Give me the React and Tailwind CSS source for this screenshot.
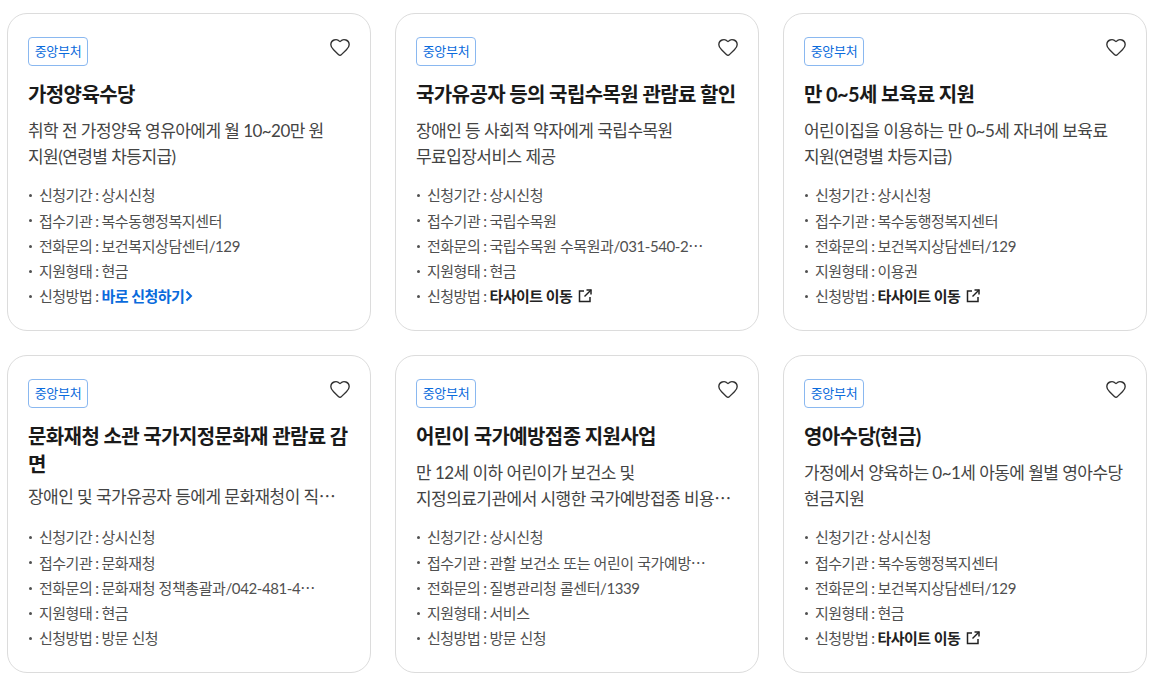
import React from 'react';
import { Heart } from 'lucide-react';

const cards = [
  {
    title: '가정양육수당',
    desc: '취학 전 가정양육 영유아에게 월 10~20만 원 지원(연령별 차등지급)',
    org: '복수동행정복지센터',
    tel: '보건복지상담센터/129',
    kind: '현금',
    apply: 'direct',
  },
  {
    title: '국가유공자 등의 국립수목원 관람료 할인',
    desc: '장애인 등 사회적 약자에게 국립수목원 무료입장서비스 제공',
    org: '국립수목원',
    tel: '국립수목원 수목원과/031-540-2000',
    kind: '현금',
    apply: 'external',
  },
  {
    title: '만 0~5세 보육료 지원',
    desc: '어린이집을 이용하는 만 0~5세 자녀에 보육료 지원(연령별 차등지급)',
    org: '복수동행정복지센터',
    tel: '보건복지상담센터/129',
    kind: '이용권',
    apply: 'external',
  },
  {
    title: '문화재청 소관 국가지정문화재 관람료 감면',
    desc: '장애인 및 국가유공자 등에게 문화재청이 직접 관리하는 문화재 관람료 감면',
    org: '문화재청',
    tel: '문화재청 정책총괄과/042-481-4600',
    kind: '현금',
    apply: 'visit',
    oneLine: true,
  },
  {
    title: '어린이 국가예방접종 지원사업',
    desc: '만 12세 이하 어린이가 보건소 및 지정의료기관에서 시행한 국가예방접종 비용 지원합니다',
    org: '관할 보건소 또는 어린이 국가예방접종 지정의료기관',
    tel: '질병관리청 콜센터/1339',
    kind: '서비스',
    apply: 'visit',
  },
  {
    title: '영아수당(현금)',
    desc: '가정에서 양육하는 0~1세 아동에 월별 영아수당 현금지원',
    org: '복수동행정복지센터',
    tel: '보건복지상담센터/129',
    kind: '현금',
    apply: 'external',
  },
];

function ExternalIcon() {
  return (
    <svg width="14" height="14" viewBox="0 0 14 14" fill="none" stroke="#222" strokeWidth="1.5" className="ml-[6px] shrink-0">
      <path d="M6 2H1.5v10.5H12V8" />
      <path d="M8.5 1H13v4.5" />
      <path d="M13 1L6.5 7.5" />
    </svg>
  );
}

function ChevronIcon() {
  return (
    <svg width="8" height="12" viewBox="0 0 8 12" fill="none" stroke="#0a6bdc" strokeWidth="2" className="ml-[1px] shrink-0">
      <path d="M1.5 1.5L6 6l-4.5 4.5" />
    </svg>
  );
}

function InfoRow({ label, children }) {
  return (
    <li className="flex items-center h-[25.2px] text-[15px] tracking-[-0.5px] text-[#505050]">
      <span className="w-[3px] h-[3px] rounded-full bg-[#505050] ml-[1px] mr-[7px] shrink-0"></span>
      <span className="shrink-0">{label}</span>
      <span className="shrink-0 mx-[3px]">:</span>
      {children}
    </li>
  );
}

// the ellipsis takes the block's font, so the block stays on the CJK font and the text goes in a span
function Clipped({ text }) {
  return (
    <span className="truncate max-w-[218px] tracking-[-0.4px] font-['Noto_Sans_CJK_KR',sans-serif]">
      <span className="font-['Lato','Noto_Sans_CJK_KR',sans-serif]">{text}</span>
    </span>
  );
}

function ApplyValue({ type }) {
  if (type === 'direct') {
    return <span className="flex items-center font-bold text-[#0a6bdc]">바로 신청하기<ChevronIcon /></span>;
  }
  if (type === 'external') {
    return <span className="flex items-center font-bold text-[#222]">타사이트 이동<ExternalIcon /></span>;
  }
  return <span>방문 신청</span>;
}

function Card({ card }) {
  return (
    <div className="h-[318px] bg-white border border-[#dcdcdc] rounded-[20px] pt-[23px] pb-[21px] px-[20px] flex flex-col">
      <div className="flex items-start justify-between">
        <span className="w-[60px] h-[29px] flex items-center justify-center border border-[#8ab8f0] rounded-[4px] text-[13px] tracking-[-0.3px] text-[#0a6bdc]">
          중앙부처
        </span>
        <Heart size={22} strokeWidth={1.5} className="text-[#333] -mr-[1px] -mt-[1px]" />
      </div>
      <h3 className="mt-[14px] text-[20px] leading-[28px] font-bold text-[#1a1a1a] tracking-[-0.6px] break-all">{card.title}</h3>
      <p className={`text-[17px] leading-[24.5px] text-[#444] tracking-[-0.55px] break-keep font-['Noto_Sans_CJK_KR',sans-serif] ${card.oneLine ? 'mt-[6px] truncate' : 'mt-[10px] line-clamp-2'}`}>
        <span className="font-['Lato','Noto_Sans_CJK_KR',sans-serif]">{card.desc}</span>
      </p>
      <ul className="mt-auto">
        <InfoRow label="신청기간"><Clipped text="상시신청" /></InfoRow>
        <InfoRow label="접수기관"><Clipped text={card.org} /></InfoRow>
        <InfoRow label="전화문의"><Clipped text={card.tel} /></InfoRow>
        <InfoRow label="지원형태"><Clipped text={card.kind} /></InfoRow>
        <InfoRow label="신청방법"><ApplyValue type={card.apply} /></InfoRow>
      </ul>
    </div>
  );
}

export default function App() {
  return (
    <div className="w-[1163px] h-[683px] overflow-hidden bg-white pt-[13px] pl-[7px] font-['Lato','Noto_Sans_CJK_KR',sans-serif]">
      <div className="grid grid-cols-[364px_364px_364px] gap-[24px]">
        {cards.map((card) => (
          <Card key={card.title} card={card} />
        ))}
      </div>
    </div>
  );
}
